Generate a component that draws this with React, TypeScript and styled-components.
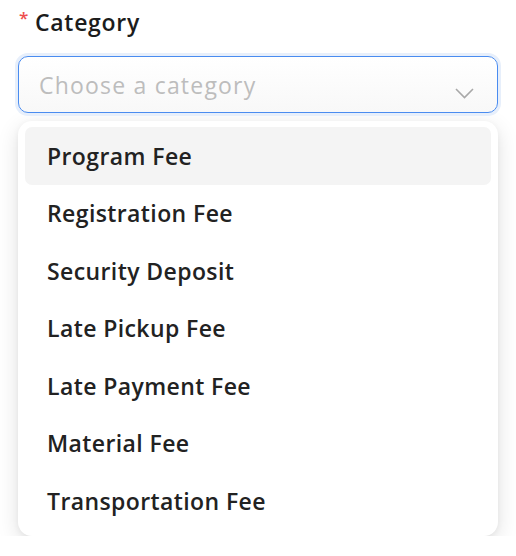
import styled, { createGlobalStyle } from "styled-components";

const GlobalStyle = createGlobalStyle`
    html, body {
        margin: 0;
        padding: 0;
        background: #ffffff;
    }
    body {
        font-family: "Open Sans", "Noto Sans", sans-serif;
        color: #1f1f1f;
    }
`;

const Field = styled.div`
    width: 480px;
    padding: 6px 0 0 18px;
`;

const Label = styled.label`
    display: flex;
    align-items: flex-start;
    gap: 6px;
    font-size: 23px;
    font-weight: 600;
    letter-spacing: 0.7px;
    height: 40px;
    line-height: 32px;
    color: #1c1c1c;

    span {
        color: #ee4d4d;
        font-size: 17px;
        line-height: 24px;
        padding-left: 1px;
    }
`;

const Select = styled.div`
    position: relative;
    box-sizing: border-box;
    height: 57px;
    margin-top: 10px;
    border: 1.5px solid #4a8cf0;
    border-radius: 10px;
    background: linear-gradient(#ffffff, #f8f8f8);
    box-shadow: 0 0 0 3px #e7effb;
    display: flex;
    align-items: center;
    padding: 0 20px;

    p {
        margin: 0;
        font-size: 23px;
        letter-spacing: 1.2px;
        color: #bdbdbd;
        flex: 1;
    }

    svg {
        position: relative;
        top: 9px;
        right: 3px;
    }
`;

const Menu = styled.ul`
    list-style: none;
    margin: 8px 0 0 0;
    padding: 6px 7px;
    background: #ffffff;
    border-radius: 14px;
    box-shadow: 0 6px 22px rgba(0, 0, 0, 0.12), 0 2px 6px rgba(0, 0, 0, 0.05);
`;

const Item = styled.li<{ $active?: boolean }>`
    height: 57.5px;
    display: flex;
    align-items: center;
    padding-left: 22px;
    font-size: 23px;
    font-weight: 600;
    letter-spacing: 0.4px;
    color: #222222;
    border-radius: 7px;
    background: ${(p) => (p.$active ? "#f4f4f4" : "transparent")};
`;

const categories = [
    "Program Fee",
    "Registration Fee",
    "Security Deposit",
    "Late Pickup Fee",
    "Late Payment Fee",
    "Material Fee",
    "Transportation Fee",
];

export default function App() {
    return (
        <>
            <GlobalStyle />
            <Field>
                <Label>
                    <span>*</span>Category
                </Label>
                <Select>
                    <p>Choose a category</p>
                    <svg width="19" height="11" viewBox="0 0 19 11" fill="none">
                        <path d="M1 1 L9.5 9.5 L18 1" stroke="#a8a8a8" strokeWidth="1.6" />
                    </svg>
                </Select>
                <Menu>
                    {categories.map((c, i) => (
                        <Item key={c} $active={i === 0}>
                            {c}
                        </Item>
                    ))}
                </Menu>
            </Field>
        </>
    );
}
